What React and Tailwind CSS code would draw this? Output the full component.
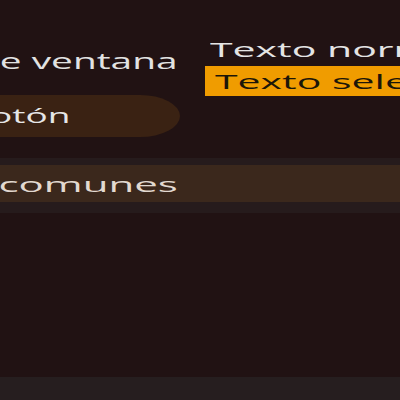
const App = () => {
  return (
    <div className="w-[400px] h-[400px] overflow-hidden bg-[#211213] flex flex-col font-['Open_Sans',sans-serif]">
      <div className="h-[158px] flex">
        <div className="w-[205px] pt-[40px] flex flex-col">
          <div className="h-[42px] w-[178px] flex items-center justify-end whitespace-nowrap">
            <span className="inline-block origin-right scale-x-[1.85] text-[21px] leading-none text-[#e2e2e2]">
              Título de ventana
            </span>
          </div>
          <div className="mt-[13px] h-[42px] w-[180px] bg-[#3a2213] rounded-tr-[40px_21px] rounded-br-[40px_21px] flex items-center justify-end pr-[110px] whitespace-nowrap">
            <span className="inline-block origin-right scale-x-[1.85] text-[20px] leading-none text-[#e6e6e6]">
              Botón
            </span>
          </div>
        </div>
        <div className="flex-1 pt-[33px] flex flex-col overflow-hidden">
          <div className="h-[33px] pl-[5px] flex items-center whitespace-nowrap">
            <span className="inline-block origin-left scale-x-[2.05] text-[20px] leading-none text-[#e4e4e4]">
              Texto normal
            </span>
          </div>
          <div className="h-[30px] bg-[#f09c00] pl-[10px] pt-[2px] flex items-center whitespace-nowrap">
            <span className="inline-block origin-left scale-x-[2.05] text-[20px] leading-none text-[#1c1608]">
              Texto seleccionado
            </span>
          </div>
        </div>
      </div>
      <div className="h-[7px] bg-[#261b1c]" />
      <div className="h-[37px] bg-[#3b281c] pt-[2px] flex items-center">
        <div className="w-[178px] flex justify-end whitespace-nowrap">
          <span className="inline-block origin-right scale-x-[2.1] text-[20px] leading-none text-[#e2d9d0]">
            Tareas comunes
          </span>
        </div>
      </div>
      <div className="h-[11px] bg-[#261b1c]" />
      <div className="flex-1" />
      <div className="h-[23px] bg-[#261e1f]" />
    </div>
  )
}

export default App
